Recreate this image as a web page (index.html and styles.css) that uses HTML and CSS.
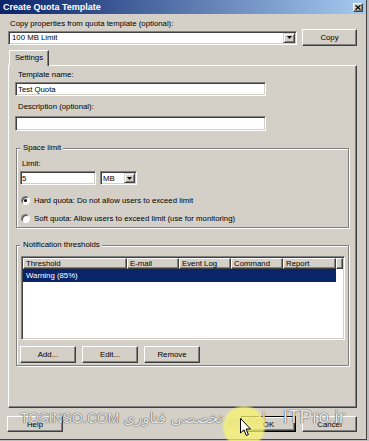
FILE: index.html
```html
<!DOCTYPE html>
<html>
<head>
<meta charset="utf-8">
<link rel="stylesheet" href="styles.css">
</head>
<body>
<div class="window">
  <div class="titlebar">
    <span class="title">Create Quota Template</span>
    <span class="close"><svg width="6" height="5" viewBox="0 0 6 5"><path d="M0.5 0.3 L5.5 4.7 M5.5 0.3 L0.5 4.7" stroke="#000" stroke-width="1.3" fill="none"/></svg></span>
  </div>
  <div class="body">
    <div class="lbl top-lbl">Copy properties from quota template (optional):</div>
    <div class="copy-row">
      <div class="field combo-main"><span class="combo-text">100 MB Limit</span><span class="drop"><svg width="5" height="3" viewBox="0 0 5 3"><path d="M0 0 H5 L2.5 3 Z" fill="#000"/></svg></span></div>
      <div class="btn copy">Copy</div>
    </div>
    <div class="tabs"><div class="tab">Settings</div></div>
    <div class="panel">
      <div class="lbl name-lbl">Template name:</div>
      <div class="field textbox name">Test Quota</div>
      <div class="lbl desc-lbl">Description (optional):</div>
      <div class="field textbox desc"></div>
      <fieldset class="group space">
        <legend>Space limit</legend>
        <div class="lbl limit-lbl">Limit:</div>
        <div class="limit-row">
          <div class="field limit">5</div>
          <div class="field unit"><span class="combo-text">MB</span><span class="drop small"><svg width="5" height="3" viewBox="0 0 5 3"><path d="M0 0 H5 L2.5 3 Z" fill="#000"/></svg></span></div>
        </div>
        <div class="radio-row r1"><span class="radio checked"></span><span>Hard quota: Do not allow users to exceed limit</span></div>
        <div class="radio-row r2"><span class="radio"></span><span>Soft quota: Allow users to exceed limit (use for monitoring)</span></div>
      </fieldset>
      <fieldset class="group notif">
        <legend>Notification thresholds</legend>
        <div class="listview">
          <div class="lv-header">
            <span class="col c-th">Threshold</span>
            <span class="col c-em">E-mail</span>
            <span class="col c-ev">Event Log</span>
            <span class="col c-cm">Command</span>
            <span class="col c-rp">Report</span>
            <span class="col c-fill"></span>
          </div>
          <div class="lv-row">Warning (85%)</div>
        </div>
        <div class="btn-row">
          <div class="btn">Add...</div>
          <div class="btn">Edit...</div>
          <div class="btn">Remove</div>
        </div>
      </fieldset>
    </div>
    <div class="footer">
      <div class="btn help">Help</div>
      <div class="ok-cancel">
        <div class="btn ok">OK</div>
        <div class="btn cancel">Cancel</div>
      </div>
    </div>
  </div>
  <div class="watermark">
    <span class="wm-en">TOSINSO.COM</span>
    <span class="wm-fa" dir="rtl">انجمن تخصصی فناوری</span>
    <span class="wm-it">ITPro.ir</span>
  </div>
  <div class="spot"></div>
  <svg class="cursor" width="12" height="19" viewBox="0 0 12 19"><path d="M0.5 0.5 L0.5 15 L4 11.8 L6.3 17.5 L8.4 16.6 L6.1 11 L10.5 11 Z" fill="#fff" stroke="#000" stroke-width="1"/></svg>
</div>
</body>
</html>
```
FILE: styles.css
```css
* { box-sizing: border-box; }
html, body { margin: 0; padding: 0; overflow: hidden; }
body {
  width: 369px;
  height: 441px;
  background: #bdbdbd;
  font-family: "Liberation Sans", Arial, sans-serif;
  font-size: 7.8px;
  color: #000;
}
.window {
  position: relative;
  width: 367px;
  height: 440px;
  background: #d4d0c8;
  border-right: 1px solid #404040;
  border-bottom: 1px solid #404040;
}
.titlebar {
  height: 14px;
  background: linear-gradient(to right, #0a246a, #a6caf0);
  display: flex;
  align-items: center;
  justify-content: space-between;
  padding: 0 3px;
}
.title { color: #fff; font-weight: bold; font-size: 9px; line-height: 14px; white-space: nowrap; }
.close {
  width: 10px; height: 9px;
  background: #d4d0c8;
  border: 1px solid; border-color: #fff #404040 #404040 #fff;
  box-shadow: inset -1px -1px #808080;
  display: flex; align-items: center; justify-content: center;
}
.close svg { display: block; }
.body { padding: 0 9px 0 8px; }
.lbl { line-height: 11px; height: 11px; white-space: nowrap; }
.top-lbl { margin-top: 4px; padding-left: 2px; }
.copy-row { display: flex; justify-content: space-between; align-items: center; height: 17px; }
.field {
  background: #fff;
  border: 1px solid; border-color: #808080 #fff #fff #808080;
  box-shadow: inset 1px 1px #404040, inset -1px -1px #d4d0c8;
  display: flex; align-items: center; white-space: nowrap;
}
.combo-main { width: 289px; height: 14px; padding-left: 3px; }
.combo-text { flex: 1; }
.drop {
  width: 12px; height: 10px; margin-right: 1px; flex: none;
  background: #d4d0c8;
  border: 1px solid; border-color: #d4d0c8 #404040 #404040 #d4d0c8;
  box-shadow: inset 1px 1px #fff, inset -1px -1px #808080;
  display: flex; align-items: center; justify-content: center;
}
.drop svg { display: block; }
.drop.small { width: 11px; }
.btn {
  height: 17px;
  background: #d4d0c8;
  border: 1px solid; border-color: #fff #404040 #404040 #fff;
  box-shadow: inset -1px -1px #808080;
  display: flex; align-items: center; justify-content: center;
  white-space: nowrap;
}
.copy { width: 55px; }
.tabs { margin-top: 4px; padding-left: 1px; display: flex; }
.tab {
  position: relative; z-index: 1;
  width: 40px; height: 16px; margin-bottom: -1px;
  background: #d4d0c8;
  border: 1px solid; border-bottom: none;
  border-color: #fff #404040 transparent #fff;
  box-shadow: inset -1px 0 #808080;
  display: flex; align-items: center; justify-content: center;
  padding-bottom: 2px;
}
.panel {
  height: 343px;
  border: 1px solid; border-color: #fff #404040 #404040 #fff;
  box-shadow: inset -1px -1px #808080;
  padding: 0 0 0 6px;
}
.panel > .lbl { padding-left: 3px; }
.name-lbl { margin-top: 3px; line-height: 12px; height: 12px; }
.textbox { width: 251px; height: 14px; padding-left: 2px; }
.name { margin-top: 1px; }
.desc-lbl { margin-top: 5px; line-height: 12px; height: 12px; }
.desc { margin-top: 3px; height: 15px; }
fieldset.group {
  margin: 12px 0 0 1px;
  width: 333px;
  min-width: 0;
  border: 1px solid #808080;
  box-shadow: inset 1px 1px #fff, 1px 1px #fff;
  padding: 6px 0 3px 3px;
}
fieldset.notif { padding-bottom: 2px; }
legend {
  padding: 0 2px 0 3px;
  line-height: 10px; height: 10px;
  background: #d4d0c8;
  white-space: nowrap;
}
.limit-lbl { padding-left: 2px; line-height: 10px; height: 10px; }
.limit-row { margin-top: 2px; display: flex; gap: 4px; }
.limit { width: 76px; height: 14px; padding-left: 1px; }
.unit { width: 37px; height: 14px; padding-left: 2px; }
.radio-row { display: flex; align-items: center; height: 12px; white-space: nowrap; }
.r1 { margin-top: 9px; }
.r2 { margin-top: 6px; }
.radio {
  flex: none;
  width: 9px; height: 9px;
  margin-left: 1px; margin-right: 4px;
  border-radius: 50%;
  border: 1px solid; border-color: #808080 #fff #fff #808080;
  background: #fff;
  box-shadow: inset 1px 1px #404040;
  display: flex; align-items: center; justify-content: center;
}
.radio.checked::after { content: ""; width: 3px; height: 3px; border-radius: 50%; background: #000; }
.listview {
  margin-left: 1px;
  width: 324px; height: 84px;
  background: #fff;
  border: 1px solid; border-color: #808080 #fff #fff #808080;
  box-shadow: inset 1px 1px #404040, inset -1px -1px #d4d0c8;
  padding: 1px;
}
.lv-header { display: flex; height: 11px; }
.col {
  flex: none;
  height: 11px;
  background: #d4d0c8;
  border: 1px solid; border-color: #fff #404040 #404040 #fff;
  box-shadow: inset -1px -1px #808080;
  padding-left: 2px;
  line-height: 9px;
  white-space: nowrap;
}
.c-th { width: 104px; }
.c-em, .c-ev, .c-cm { width: 52px; }
.c-rp { width: 53px; }
.c-fill { flex: 1; }
.lv-row {
  width: 313px; height: 13px; line-height: 13px;
  background: #0a246a; color: #fff;
  padding-left: 3px;
}
.btn-row { margin-top: 6px; display: flex; gap: 6px; }
.btn-row .btn { width: 56px; }
.footer { margin-top: 8px; display: flex; height: 16px; }
.help { width: 56px; height: 16px; margin-left: -1px; }
.ok-cancel { margin-left: auto; display: flex; gap: 6px; }
.ok, .cancel { width: 55px; height: 16px; }
.ok {
  border-color: #000;
  box-shadow: inset 1px 1px #fff, inset -1px -1px #404040, inset -2px -2px #808080;
}
.watermark {
  position: absolute;
  left: 20px; top: 406px;
  width: 325px;
  display: flex; align-items: baseline;
  white-space: nowrap;
  color: rgba(255, 255, 255, 0.9);
  text-shadow: 0 0 1px #333, 0 0 1px #555;
}
.wm-en { font-family: "Liberation Sans", Arial, sans-serif; font-size: 14px; }
.wm-fa { font-family: "DejaVu Sans", sans-serif; font-size: 15px; margin-left: 4px; }
.wm-it { font-family: "Liberation Sans", Arial, sans-serif; font-size: 19px; margin-left: auto; }
.spot {
  position: absolute;
  left: 222px; top: 405px;
  width: 44px; height: 44px;
  border-radius: 50%;
  background: radial-gradient(circle, rgba(250, 245, 110, 0.75) 62%, rgba(250, 245, 110, 0) 72%);
}
.cursor { position: absolute; left: 240px; top: 418px; }
```
